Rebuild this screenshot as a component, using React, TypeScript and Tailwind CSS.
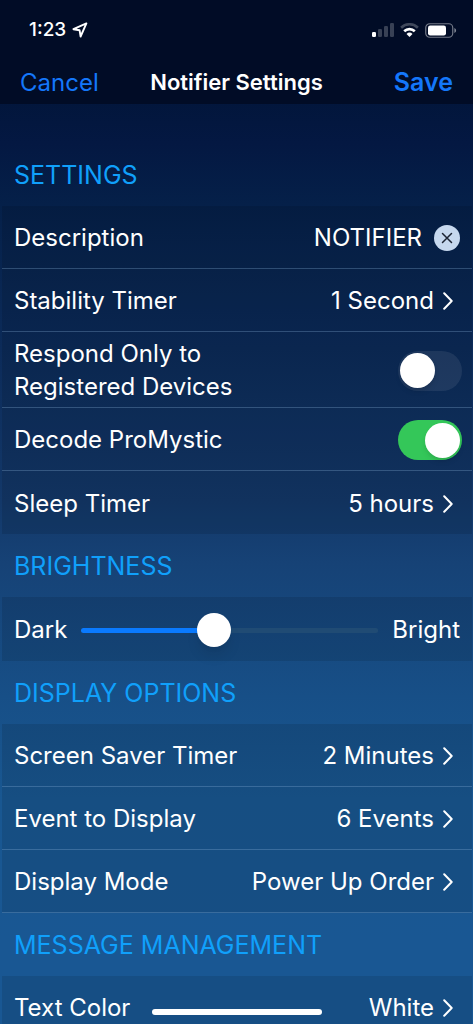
import { useState } from "react";
import type { CSSProperties, ReactNode } from "react";

function LocationArrow() {
  return (
    <svg width="16" height="16" viewBox="0 0 16 16" fill="none" aria-hidden="true">
      <path
        d="M14.4 1.4 1.4 7.2l6.2 1.1 1 6.2z"
        stroke="white"
        strokeWidth="1.9"
        strokeLinejoin="round"
      />
    </svg>
  );
}

function SignalBars() {
  return (
    <svg width="22" height="14" viewBox="0 0 22 14" fill="white" aria-hidden="true">
      <rect x="0" y="9" width="4" height="5" rx="1.2" />
      <rect x="6" y="6" width="4" height="8" rx="1.2" opacity="0.22" />
      <rect x="12" y="3" width="4" height="11" rx="1.2" opacity="0.22" />
      <rect x="18" y="0" width="4" height="14" rx="1.2" opacity="0.22" />
    </svg>
  );
}

function WifiIcon() {
  return (
    <svg width="19" height="14" viewBox="0 0 19 14" fill="none" aria-hidden="true">
      <path d="M1.1 4.7a12 12 0 0 1 16.8 0" stroke="white" strokeWidth="2.6" opacity="0.25" />
      <path d="M4.2 8.3a7.6 7.6 0 0 1 10.6 0" stroke="white" strokeWidth="2.6" />
      <path d="M9.5 14 6.5 11a4.3 4.3 0 0 1 6 0z" fill="white" />
    </svg>
  );
}

function BatteryIcon() {
  return (
    <svg width="32" height="15" viewBox="0 0 32 15" fill="none" aria-hidden="true">
      <rect x="0.75" y="0.75" width="27" height="13.5" rx="4" stroke="white" strokeWidth="1.2" opacity="0.45" />
      <rect x="3" y="2.6" width="18" height="9.8" rx="2.2" fill="white" />
      <path d="M29.4 5v5c1-.4 1.7-1.3 1.7-2.5S30.4 5.4 29.4 5z" fill="white" opacity="0.5" />
    </svg>
  );
}

function Chevron() {
  return (
    <svg width="10" height="18" viewBox="0 0 10 18" fill="none" aria-hidden="true">
      <path
        d="M1.2 1.2 8.7 9 1.2 16.8"
        stroke="white"
        strokeWidth="2"
        strokeLinecap="round"
        strokeLinejoin="round"
      />
    </svg>
  );
}

function StatusBar() {
  return (
    <div className="flex h-[60px] items-center justify-between pr-4 pl-[29px]">
      <div className="flex items-center gap-1.5">
        <span className="text-[19px] font-medium">1:23</span>
        <LocationArrow />
      </div>
      <div className="flex items-center gap-1.5">
        <SignalBars />
        <WifiIcon />
        <BatteryIcon />
      </div>
    </div>
  );
}

function NavBar() {
  return (
    <div className="grid h-11 grid-cols-[1fr_auto_1fr] items-center px-5 pt-0.5">
      <button type="button" className="justify-self-start text-2xl text-[#1477fb]">
        Cancel
      </button>
      <h1 className="text-[22px] font-semibold">Notifier Settings</h1>
      <button type="button" className="justify-self-end text-[25px] font-semibold text-[#1477fb]">
        Save
      </button>
    </div>
  );
}

function Section({ title, children }: { title: string; children: ReactNode }) {
  return (
    <section>
      <h2 className="flex h-[63px] items-center px-3.5 pt-0.5 text-[25px] text-[#10a0fb]">{title}</h2>
      <div className="mr-px ml-0.5 bg-black/10">{children}</div>
    </section>
  );
}

const rowClass =
  "flex min-h-[63px] w-full items-center justify-between border-[#8cb4dc]/30 pt-0.5 pr-2.5 pl-3 text-left";

function LinkRow({
  label,
  value,
  divider = true,
}: {
  label: string;
  value: string;
  divider?: boolean;
}) {
  return (
    <button type="button" className={`${rowClass} ${divider ? "border-b" : ""}`}>
      <span>{label}</span>
      <span className="flex items-center gap-[9px] pr-[9px]">
        {value}
        <Chevron />
      </span>
    </button>
  );
}

function SwitchRow({ label, initial }: { label: string; initial: boolean }) {
  const [on, setOn] = useState(initial);

  return (
    <label className={`${rowClass} border-b`}>
      <span className="max-w-[240px] pt-[3px] pb-1 leading-[33px]">{label}</span>
      <input
        type="checkbox"
        role="switch"
        checked={on}
        onChange={(e) => setOn(e.target.checked)}
        className="flex h-10 w-16 shrink-0 appearance-none items-center rounded-full bg-white/8 px-[2px] before:size-[35px] before:rounded-full before:bg-white before:shadow-md checked:justify-end checked:bg-[#34c759]"
      />
    </label>
  );
}

function DescriptionRow() {
  const [text, setText] = useState("NOTIFIER");

  return (
    <div className={`${rowClass} border-b`}>
      <label htmlFor="description">Description</label>
      <div className="flex min-w-0 flex-1 items-center gap-3 pr-0.5">
        <input
          id="description"
          type="text"
          value={text}
          onChange={(e) => setText(e.target.value)}
          className="min-w-0 flex-1 bg-transparent text-right outline-none"
        />
        <button
          type="button"
          aria-label="Clear description"
          onClick={() => setText("")}
          className="flex size-[26px] items-center justify-center rounded-full bg-[#c6d8ee]"
        >
          <svg width="12" height="12" viewBox="0 0 12 12" aria-hidden="true">
            <path d="m1.5 1.5 9 9m0-9-9 9" stroke="#1c2433" strokeWidth="1.5" strokeLinecap="round" />
          </svg>
        </button>
      </div>
    </div>
  );
}

function BrightnessRow() {
  const [level, setLevel] = useState(44);

  return (
    <div className="flex h-16 items-center gap-3.5 pt-0.5 pr-3 pl-3">
      <label htmlFor="brightness">Dark</label>
      <input
        id="brightness"
        type="range"
        min={0}
        max={100}
        value={level}
        onChange={(e) => setLevel(Number(e.target.value))}
        style={{ "--level": `${level}%` } as CSSProperties}
        className="h-[34px] min-w-0 flex-1 appearance-none bg-transparent [&::-webkit-slider-runnable-track]:h-[5px] [&::-webkit-slider-runnable-track]:rounded-full [&::-webkit-slider-runnable-track]:bg-[linear-gradient(to_right,#0a7aff_var(--level),#204b74_var(--level))] [&::-webkit-slider-thumb]:-mt-[15px] [&::-webkit-slider-thumb]:size-[34px] [&::-webkit-slider-thumb]:appearance-none [&::-webkit-slider-thumb]:rounded-full [&::-webkit-slider-thumb]:bg-white [&::-webkit-slider-thumb]:shadow-lg"
      />
      <span>Bright</span>
    </div>
  );
}

export default function App() {
  return (
    <div className="relative flex h-screen flex-col overflow-hidden bg-[linear-gradient(to_bottom,#02163c_10%,#041842_14%,#052049_20%,#0c2b59_34%,#133869_49%,#164276_55%,#174f87_68%,#195791_78%,#195793_92%)] font-['Inter',sans-serif] text-2xl text-white">
      <header className="bg-[#010c26]">
        <StatusBar />
        <NavBar />
      </header>

      <main className="min-h-0 flex-1 overflow-y-auto pt-[39px] [scrollbar-width:none]">
        <Section title="SETTINGS">
          <DescriptionRow />
          <LinkRow label="Stability Timer" value="1 Second" />
          <SwitchRow label="Respond Only to Registered Devices" initial={false} />
          <SwitchRow label="Decode ProMystic" initial={true} />
          <LinkRow label="Sleep Timer" value="5 hours" divider={false} />
        </Section>

        <Section title="BRIGHTNESS">
          <BrightnessRow />
        </Section>

        <Section title="DISPLAY OPTIONS">
          <LinkRow label="Screen Saver Timer" value="2 Minutes" />
          <LinkRow label="Event to Display" value="6 Events" />
          <LinkRow label="Display Mode" value="Power Up Order" />
        </Section>

        <Section title="MESSAGE MANAGEMENT">
          <LinkRow label="Text Color" value="White" />
        </Section>
      </main>

      {/* home indicator floats over the list */}
      <div className="pointer-events-none absolute bottom-[9px] left-1/2 h-1.5 w-[170px] -translate-x-1/2 rounded-full bg-white" />
    </div>
  );
}
